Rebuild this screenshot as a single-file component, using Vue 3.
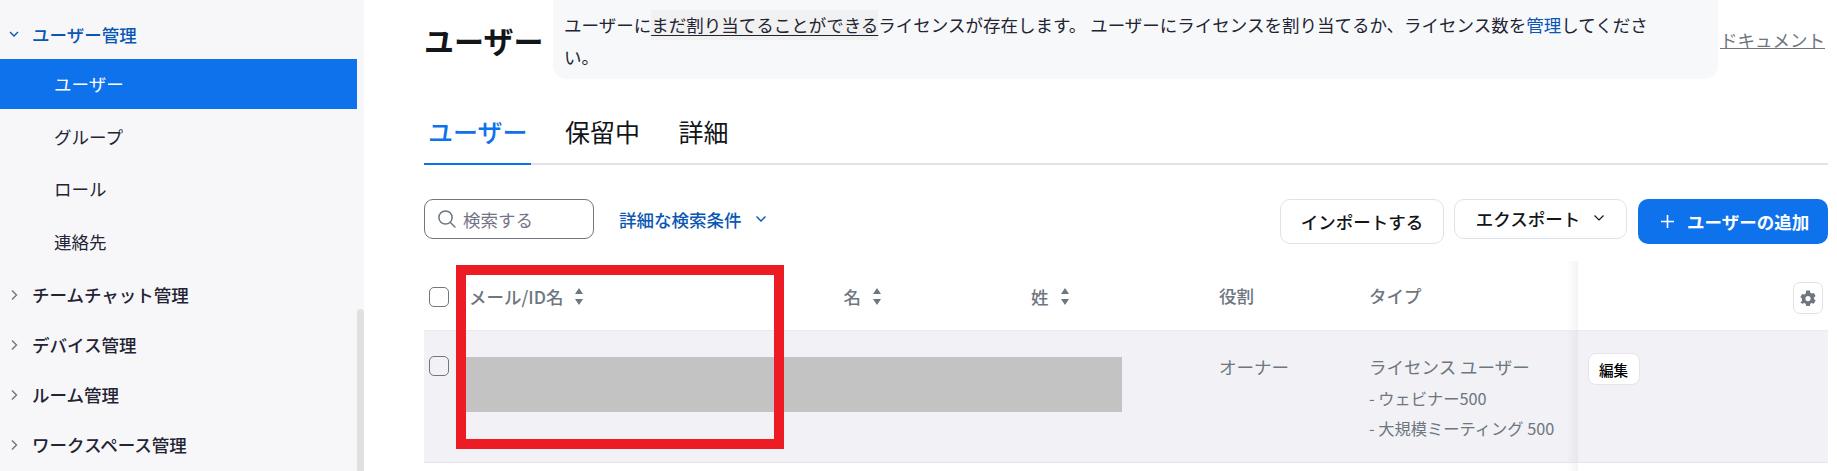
<script setup>
const children = ['ユーザー', 'グループ', 'ロール', '連絡先']
const collapsed = ['チームチャット管理', 'デバイス管理', 'ルーム管理', 'ワークスペース管理']
</script>

<template>
  <div class="page">
    <aside class="sidebar">
      <div class="nav-parent open">
        <svg class="chev" width="12" height="12" viewBox="0 0 12 12"><path d="M2 4l4 4 4-4" /></svg>
        <span>ユーザー管理</span>
      </div>
      <ul class="nav-children">
        <li v-for="(c, i) in children" :key="c" :class="{ active: i === 0 }">{{ c }}</li>
      </ul>
      <div v-for="p in collapsed" :key="p" class="nav-parent">
        <svg class="chev" width="12" height="12" viewBox="0 0 12 12"><path d="M4 1.5l4.5 4.5L4 10.5" /></svg>
        <span>{{ p }}</span>
      </div>
      <div class="scroll-thumb"></div>
    </aside>

    <main class="main">
      <header class="head">
        <h1 class="title">ユーザー</h1>
        <div class="banner">
          ユーザーに<span class="hint">まだ割り当てることができる</span>ライセンスが存在します。 ユーザーにライセンスを割り当てるか、ライセンス数を<a class="link">管理</a>してください。
        </div>
        <a class="doc">ドキュメント</a>
      </header>

      <nav class="tabs">
        <span class="tab current">ユーザー</span>
        <span class="tab">保留中</span>
        <span class="tab">詳細</span>
      </nav>

      <section class="toolbar">
        <label class="search">
          <svg width="20" height="20" viewBox="0 0 20 20" class="search-ico">
            <circle cx="8.5" cy="8.5" r="6.6" />
            <path d="M13.4 13.4l5 5.2" />
          </svg>
          <span class="placeholder">検索する</span>
        </label>
        <a class="advanced">
          詳細な検索条件
          <svg width="12" height="12" viewBox="0 0 12 12"><path d="M1.5 3.5L6 8l4.5-4.5" /></svg>
        </a>
        <div class="actions">
          <button class="btn import">インポートする</button>
          <button class="btn export">
            <span class="export-label">エクスポート</span>
            <svg width="12" height="12" viewBox="0 0 12 12"><path d="M1.5 3.5L6 8l4.5-4.5" /></svg>
          </button>
          <button class="btn primary">
            <svg class="plus" width="13" height="13" viewBox="0 0 13 13"><path d="M6.5 0v13M0 6.5h13" /></svg>
            ユーザーの追加
          </button>
        </div>
      </section>

      <section class="table">
        <div class="row head-row">
          <div class="cell check-cell"><span class="check"></span></div>
          <div class="cell th">メール/ID名
            <svg class="sort" width="8" height="17" viewBox="0 0 8 17"><path d="M4 0l4 6H0zM0 11h8l-4 6z" /></svg>
          </div>
          <div class="cell th">名
            <svg class="sort" width="8" height="17" viewBox="0 0 8 17"><path d="M4 0l4 6H0zM0 11h8l-4 6z" /></svg>
          </div>
          <div class="cell th">姓
            <svg class="sort" width="8" height="17" viewBox="0 0 8 17"><path d="M4 0l4 6H0zM0 11h8l-4 6z" /></svg>
          </div>
          <div class="cell th plain">役割</div>
          <div class="cell th plain">タイプ</div>
          <div class="cell fixed fixed-head">
            <button class="gear">
              <svg width="16" height="17" viewBox="0 0 16 17">
                <path fill-rule="evenodd" d="M6.2.6h3.6l.6 2.2 1.2.7 2.2-.6 1.8 3.1-1.6 1.6v1.4l1.6 1.6-1.8 3.1-2.2-.6-1.2.7-.6 2.2H6.2l-.6-2.2-1.2-.7-2.2.6L.4 12.6 2 11V8.6L.4 7l1.8-3.1 2.2.6 1.2-.7zM8 6a2.6 2.6 0 1 0 0 5.2A2.6 2.6 0 0 0 8 6z" />
              </svg>
            </button>
          </div>
        </div>

        <div class="row data-row">
          <div class="cell check-cell"><span class="check"></span></div>
          <div class="cell mask-cell"><div class="mask"></div></div>
          <div class="cell td">オーナー</div>
          <div class="cell td">
            <div>ライセンス ユーザー</div>
            <div class="sub">- ウェビナー500</div>
            <div class="sub">- 大規模ミーティング 500</div>
          </div>
          <div class="cell fixed fixed-data"><button class="edit">編集</button></div>
        </div>

        <div class="row tail-row">
          <div class="cell tail-gap"></div>
          <div class="cell fixed tail-fixed"></div>
        </div>
      </section>

      <div class="annotation"></div>
    </main>
  </div>
</template>

<style scoped>
.page {
  display: flex;
  width: 1837px;
  height: 471px;
  overflow: hidden;
  background: #fff;
  color: #232333;
  font-family: "Noto Sans CJK JP", "Noto Sans", sans-serif;
  font-size: 17.5px;
}

.sidebar {
  position: relative;
  flex: none;
  width: 364px;
  height: 471px;
  padding-top: 9px;
  box-sizing: border-box;
  background: #f7f7fa;
  overflow: hidden;
}
.nav-parent {
  display: flex;
  align-items: center;
  height: 50px;
  padding-left: 8px;
  font-weight: 500;
  color: #232333;
}
.nav-parent.open {
  color: #0956b5;
}
.nav-parent span {
  margin-left: 12px;
}
.chev {
  flex: none;
  fill: none;
  stroke: #6e7680;
  stroke-width: 1.4;
}
.open .chev {
  stroke: #0956b5;
}
.nav-children {
  list-style: none;
  margin: 0 0 3px;
  padding: 0;
  display: flex;
  flex-direction: column;
  gap: 2.67px;
}
.nav-children li {
  width: 357px;
  height: 50px;
  line-height: 50px;
  padding-left: 54px;
  box-sizing: border-box;
  color: #232333;
}
.nav-children li.active {
  background: #0e72ed;
  color: #fff;
}
.scroll-thumb {
  position: absolute;
  left: 357px;
  top: 309px;
  width: 7px;
  height: 180px;
  border-radius: 4px 4px 0 0;
  background: #e0e0e0;
}

.main {
  position: relative;
  flex: 1;
  min-width: 0;
  padding: 0 9px 0 60px;
}

.head {
  display: flex;
  height: 79px;
}
.title {
  flex: none;
  width: 129px;
  margin: 0;
  line-height: 80px;
  font-size: 30px;
  font-weight: 700;
  color: #131619;
  white-space: nowrap;
}
.banner {
  flex: none;
  width: 1165px;
  height: 79px;
  box-sizing: border-box;
  padding: 9px 52px 6px 11px;
  border-radius: 0 0 14px 14px;
  background: #f7f8fa;
  line-height: 32px;
  color: #232333;
}
.hint {
  display: inline-block;
  height: 30px;
  line-height: 30px;
  background: #f1f1f1;
  text-decoration: underline;
  text-underline-offset: 3px;
}
.link {
  color: #0956b5;
}
.doc {
  flex: none;
  margin: 27px 0 0 2px;
  height: 26px;
  line-height: 26px;
  white-space: nowrap;
  color: #6e7680;
  text-decoration: underline;
}

.tabs {
  display: flex;
  gap: 30.5px;
  margin-top: 31px;
  border-bottom: 2px solid #dfe3e8;
}
.tab {
  height: 43px;
  padding: 0 4px 10px;
  line-height: 43px;
  font-size: 25px;
  color: #131619;
  white-space: nowrap;
}
.tab.current {
  width: 99px;
  margin-right: -0.5px;
  color: #0e72ed;
  font-weight: 500;
  border-bottom: 2px solid #0e72ed;
  margin-bottom: -2px;
}

.toolbar {
  display: flex;
  align-items: flex-start;
  margin-top: 34px;
}
.search {
  display: flex;
  align-items: center;
  width: 170px;
  height: 40px;
  box-sizing: border-box;
  padding-left: 12px;
  border: 1px solid #6e7680;
  border-radius: 9px;
}
.search-ico {
  flex: none;
  fill: none;
  stroke: #6e7680;
  stroke-width: 1.5;
}
.placeholder {
  margin-left: 6px;
  color: #747487;
}
.advanced {
  display: flex;
  align-items: center;
  height: 40px;
  margin-left: 25px;
  color: #0956b5;
  font-weight: 500;
}
.advanced svg {
  margin-left: 13px;
  fill: none;
  stroke: #0956b5;
  stroke-width: 1.4;
}
.actions {
  display: flex;
  align-items: flex-start;
  margin-left: auto;
}
.btn {
  box-sizing: border-box;
  border: 1px solid #dfe3e8;
  border-radius: 10px;
  background: #fff;
  color: #131619;
  font: 500 17.5px "Noto Sans CJK JP", "Noto Sans", sans-serif;
  padding: 0;
}
.import {
  width: 164px;
  height: 45px;
}
.export {
  display: flex;
  align-items: center;
  justify-content: center;
  width: 173px;
  height: 40px;
  margin-left: 10px;
}
.export-label {
  margin-top: -2px;
}
.export svg {
  margin: -3px 0 0 13px;
  fill: none;
  stroke: #131619;
  stroke-width: 1.2;
}
.primary {
  display: flex;
  align-items: center;
  width: 190px;
  height: 45px;
  margin-left: 11px;
  padding-left: 23px;
  border: none;
  background: #0e72ed;
  color: #fff;
  font-weight: 700;
}
.plus {
  flex: none;
  margin-right: 13px;
  fill: none;
  stroke: #fff;
  stroke-width: 1.6;
}

.table {
  margin-top: 17px;
}
.row {
  display: grid;
  box-sizing: border-box;
  grid-template-columns: 45px 374.5px 187.5px 188px 150px 209px 250px;
}
.cell {
  box-sizing: border-box;
}
.check {
  display: block;
  width: 20px;
  height: 20px;
  box-sizing: border-box;
  border: 1px solid #6e7680;
  border-radius: 5px;
  background: transparent;
}
.head-row {
  height: 70px;
  border-bottom: 1px solid #e9e9ef;
}
.head-row .check-cell {
  padding: 26px 0 0 5px;
}
.th {
  display: flex;
  align-items: flex-start;
  padding-top: 24px;
  line-height: 24px;
  font-weight: 500;
  color: #6e7680;
}
.th.plain {
  padding-top: 23px;
}
.sort {
  flex: none;
  margin: 3px 0 0 12px;
  fill: #6e7680;
}

.fixed {
  position: relative;
}
.fixed::before {
  content: "";
  position: absolute;
  top: 0;
  bottom: 0;
  left: -12px;
  width: 12px;
  background: linear-gradient(to left, rgba(0, 0, 0, 0.045), rgba(0, 0, 0, 0));
}
.fixed-head {
  display: flex;
  justify-content: flex-end;
  padding: 21px 5px 0 0;
}
.gear {
  display: flex;
  align-items: center;
  justify-content: center;
  width: 30px;
  height: 32px;
  padding: 0;
  border: 1px solid #dfe3e8;
  border-radius: 7px;
  background: #fff;
}
.gear svg {
  fill: #6e7680;
}

.data-row {
  grid-template-columns: 42px 753px 150px 209px 250px;
  height: 132px;
  background: #f1f1f6;
  border-bottom: 1px solid #e4e4ea;
}
.data-row .check-cell {
  padding: 25px 0 0 5px;
}
.mask-cell {
  padding-top: 26px;
}
.mask {
  width: 656px;
  height: 55px;
  background: #c3c3c3;
}
.td {
  padding-top: 21px;
  line-height: 30.5px;
  color: #6e7680;
}
.sub {
  font-size: 16.25px;
}
.fixed-data {
  padding: 22px 0 0 9.5px;
}
.edit {
  display: block;
  width: 52px;
  height: 32px;
  padding: 0;
  border: 1px solid #e4e4ea;
  border-radius: 8px;
  background: #fff;
  color: #000;
  font: 500 14.6px "Noto Sans CJK JP", "Noto Sans", sans-serif;
}

.tail-row {
  grid-template-columns: 1154px 250px;
  height: 40px;
}

.annotation {
  position: absolute;
  left: 92px;
  top: 265px;
  width: 328px;
  height: 184px;
  box-sizing: border-box;
  border: 10px solid #ed1c24;
  pointer-events: none;
}
</style>
